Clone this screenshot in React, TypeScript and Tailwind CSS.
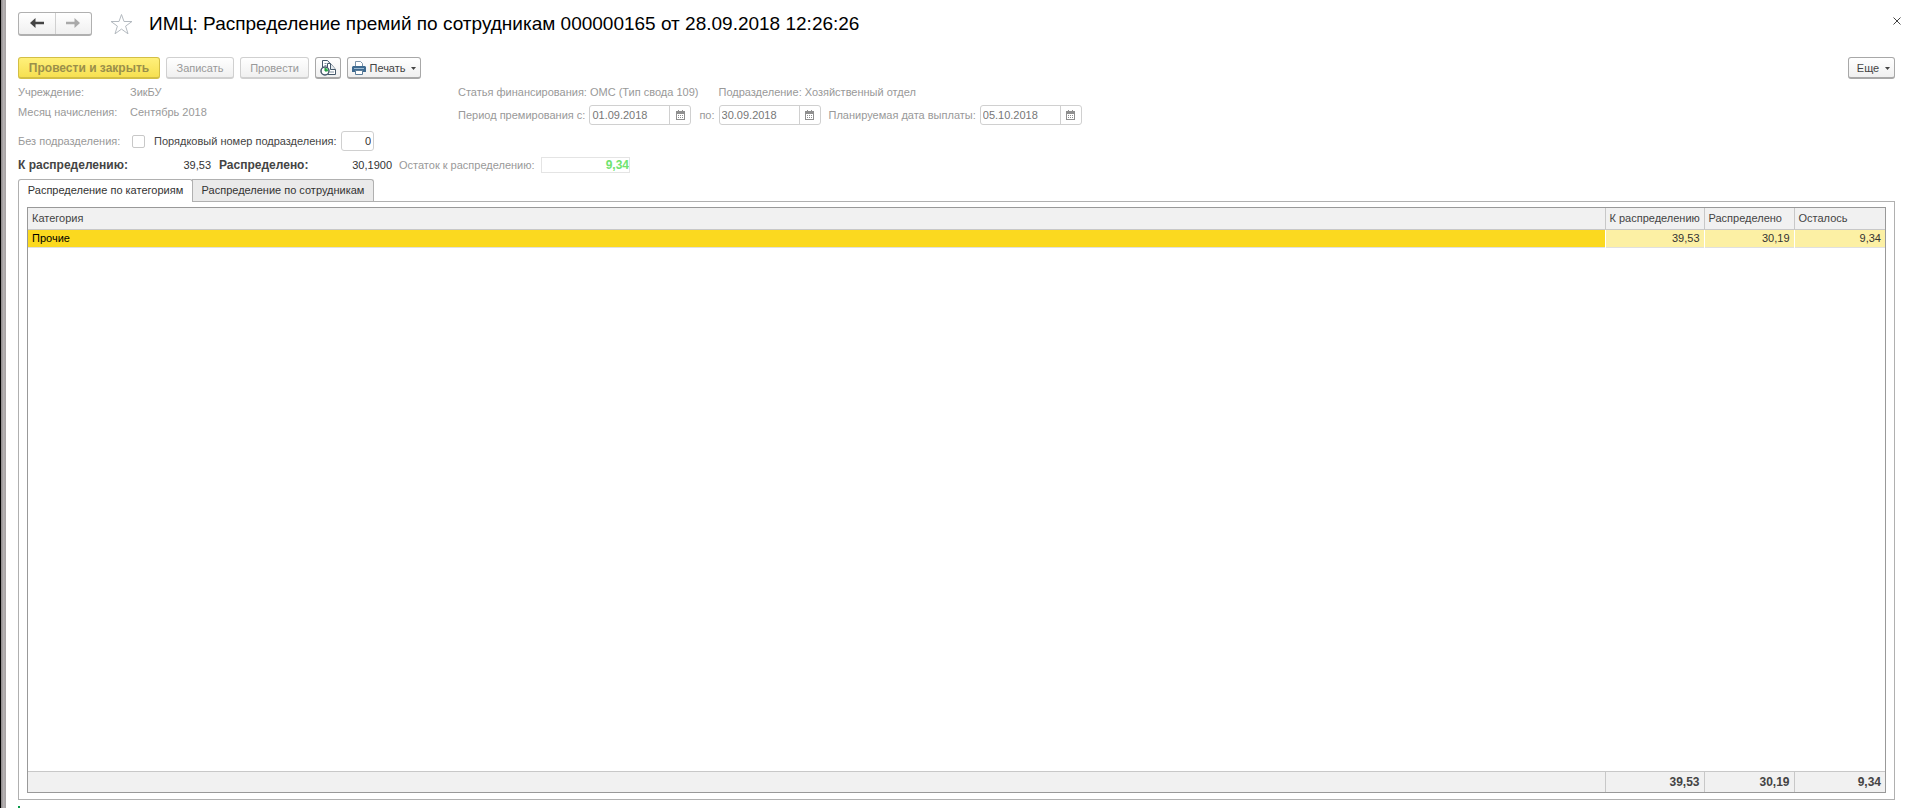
import { useState } from "react";

interface CategoryRow {
  name: string;
  total: string;
  spread: string;
  rest: string;
}

const rows: CategoryRow[] = [{ name: "Прочие", total: "39,53", spread: "30,19", rest: "9,34" }];

const tabs = ["Распределение по категориям", "Распределение по сотрудникам"];

const buttonBase =
  "flex h-[22px] items-center justify-center rounded-[3px] border border-b-2 bg-gradient-to-b from-white to-[#f0f0f0]";

function CalendarIcon() {
  return (
    <svg width="9" height="10" viewBox="0 0 9 10" fill="none" shapeRendering="crispEdges">
      <path d="M0 1h9v9H0z" fill="#8f8f8f" />
      <path d="M1 4h7v5H1z" fill="#fff" />
      <path d="M2 0h1v2H2zM6 0h1v2H6z" fill="#8f8f8f" />
      <path d="M2 5h1v1H2zM4 5h1v1H4zM6 5h1v1H6zM2 7h1v1H2zM4 7h1v1H4zM6 7h1v1H6z" fill="#8f8f8f" />
    </svg>
  );
}

function ArrowIcon({ className }: { className: string }) {
  return (
    <svg width="14" height="10" viewBox="0 0 14 10" className={className}>
      <path d="M0 5 5.500 0v3.700H14v2.600H5.500V10z" fill="currentColor" />
    </svg>
  );
}

function Caret() {
  return (
    <svg width="5" height="3" viewBox="0 0 5 3" className="mt-0.5">
      <path d="M0 0h5L2.500 3z" fill="#444" />
    </svg>
  );
}

function DateField({ id, label, value }: { id: string; label: string; value: string }) {
  return (
    <div className="flex items-center gap-1">
      <label htmlFor={id}>{label}</label>
      <div className="flex h-5 w-[102px] overflow-hidden rounded-[3px] border border-[#d0d0d0] bg-white">
        <input id={id} defaultValue={value} className="w-20 border-r border-[#d0d0d0] px-0.5 text-[#777] outline-none" />
        <button aria-label="Выбрать дату" className="flex flex-1 items-center justify-center">
          <CalendarIcon />
        </button>
      </div>
    </div>
  );
}

export default function App() {
  const [activeTab, setActiveTab] = useState(0);

  return (
    <div className="flex min-h-screen bg-white font-['Liberation_Sans',Arial,sans-serif] text-[11px] leading-4 text-[#444]">
      <div className="w-1.5 shrink-0 border-l border-black bg-gradient-to-r from-[#8c8889] via-[#b5b1b2] to-[#a5a1a2]" />

      <main className="flex min-w-0 flex-1 flex-col pl-3 pr-3">
        {/* Title */}
        <header className="flex h-[46px] items-center pt-px">
          <div className="flex h-6 w-[74px] rounded-[3px] border border-b-2 border-[#b0b0b0] bg-gradient-to-b from-white to-[#f0f0f0]">
            <button aria-label="Назад" className="flex flex-1 items-center justify-center border-r border-[#d0d0d0]">
              <ArrowIcon className="text-[#444]" />
            </button>
            <button aria-label="Вперед" className="flex flex-1 items-center justify-center">
              <ArrowIcon className="rotate-180 text-[#aaa]" />
            </button>
          </div>
          <button aria-label="Избранное" className="ml-[18px]">
            <svg width="23" height="22" viewBox="0 0 23 22" fill="none" stroke="#b4bac0">
              <path d="M11.500 1.500 14 8.500h8l-6.400 4.600 2.400 7.700-6.500-4.700L5 20.800l2.400-7.700L1 8.500h8z" />
            </svg>
          </button>
          <h1 className="ml-4 flex-1 text-[19px] leading-6 text-black">
            ИМЦ: Распределение премий по сотрудникам 000000165 от 28.09.2018 12:26:26
          </h1>
          <button aria-label="Закрыть" className="-mr-1.5 mb-1.5">
            <svg width="8" height="8" viewBox="0 0 8 8" stroke="#444">
              <path d="M.5.5l7 7M7.500.5l-7 7" />
            </svg>
          </button>
        </header>

        {/* Command bar */}
        <div className="mt-[11px] flex gap-1.5">
          <button className="h-[22px] w-[142px] rounded-[3px] border border-b-2 border-[#d3bf45] bg-gradient-to-b from-[#fff07a] to-[#f6e050] text-[12px] font-bold text-[#9a8f4a]">
            Провести и закрыть
          </button>
          <button className={`${buttonBase} w-[68px] border-[#d0d0d0] text-[#999]`}>Записать</button>
          <button className={`${buttonBase} w-[69px] border-[#d0d0d0] text-[#999]`}>Провести</button>
          <button aria-label="История" className={`${buttonBase} w-[26px] border-[#a8a8a8]`}>
            <svg width="17" height="16" viewBox="0 0 17 16" fill="#fff" stroke="#45586a">
              <path d="M2.500 12V.5h5l3.500 4V12z" />
              <path d="M7.500 14.500V3.500h3l5 6v5z" />
              <path d="M10.500 3.500v6h5" fill="#e6ebef" />
              <path d="M10 12h4" stroke="#8494a3" />
              <path d="M4.500 3.500h2M4.500 5.500h2" stroke="#8494a3" />
              <circle cx="5" cy="11" r="4" strokeWidth="1.500" />
              <path d="M5 11V8a3 3 0 0 1 3 3z" fill="#2fc04c" stroke="none" />
              <path d="M5 8v3h2.500" fill="none" stroke="#1f8f3a" />
            </svg>
          </button>
          <button className={`${buttonBase} w-[74px] gap-[3px] border-[#a8a8a8]`}>
            <svg width="14" height="14" viewBox="0 0 14 14">
              <path d="M3.500 6V.5h5l2 2V6" fill="#fff" stroke="#7b93a9" />
              <path d="M1 5h12l1 1v5H0V6z" fill="#3f6b91" />
              <path d="M2 7h10v1H2z" fill="#9dbbd3" />
              <path d="M3.500 9.500h7v4h-7z" fill="#fff" stroke="#5c7d99" />
            </svg>
            Печать
            <span className="ml-0.5 flex">
              <Caret />
            </span>
          </button>
          <button className={`${buttonBase} ml-auto w-[47px] gap-1.5 border-[#a8a8a8] pl-1`}>
            Еще
            <Caret />
          </button>
        </div>

        {/* Document details */}
        <div className="mt-[5px] flex text-[#999]">
          <dl className="grid w-[440px] grid-cols-[112px_1fr] content-start gap-y-1">
            <dt>Учреждение:</dt>
            <dd>ЗикБУ</dd>
            <dt>Месяц начисления:</dt>
            <dd>Сентябрь 2018</dd>
          </dl>
          <div>
            <div className="flex gap-5">
              <span>Статья финансирования: ОМС (Тип свода 109)</span>
              <span>Подразделение: Хозяйственный отдел</span>
            </div>
            <div className="mt-[5px] flex gap-2">
              <DateField id="from" label="Период премирования с:" value="01.09.2018" />
              <DateField id="to" label="по:" value="30.09.2018" />
              <DateField id="pay" label="Планируемая дата выплаты:" value="05.10.2018" />
            </div>
          </div>
        </div>

        <div className="mt-1.5 flex h-5 items-center">
          <label htmlFor="nodept" className="w-[114px] text-[#999]">
            Без подразделения:
          </label>
          <input
            id="nodept"
            type="checkbox"
            className="size-[13px] appearance-none rounded-[2px] border border-[#c8c8c8] bg-white"
          />
          <label htmlFor="order" className="ml-[9px] w-[187px]">
            Порядковый номер подразделения:
          </label>
          <input
            id="order"
            defaultValue="0"
            className="h-5 w-[33px] rounded-[3px] border border-[#d0d0d0] px-0.5 text-right text-[#333] outline-none"
          />
        </div>

        <div className="mt-1.5 flex h-4 items-center">
          <span className="w-[120px] text-[12px] font-bold">К распределению:</span>
          <span className="w-[73px] text-right text-[#333]">39,53</span>
          <span className="ml-2 w-[100px] text-[12px] font-bold">Распределено:</span>
          <span className="w-[73px] text-right text-[#333]">30,1900</span>
          <label htmlFor="rest" className="ml-[7px] w-[142px] text-[#999]">
            Остаток к распределению:
          </label>
          <input
            id="rest"
            readOnly
            value="9,34"
            className="h-4 w-[89px] border border-[#e4e4e4] text-right text-[12px] font-bold text-[#6fe36f] outline-none"
          />
        </div>

        {/* Tabs */}
        <div role="tablist" className="mt-1.5 flex">
          {tabs.map((tab, i) => (
            <button
              key={tab}
              role="tab"
              aria-selected={activeTab === i}
              onClick={() => setActiveTab(i)}
              className={
                activeTab === i
                  ? "z-10 -mb-px h-[23px] w-[175px] rounded-t-[3px] border border-b-0 border-[#b0b0b0] bg-white pb-0.5 text-[#333]"
                  : "-ml-px h-[22px] w-[182px] rounded-tr-[3px] border border-b-0 border-[#b0b0b0] bg-[#eaeaea] pb-0.5 text-[#333]"
              }
            >
              {tab}
            </button>
          ))}
        </div>

        <section className="grid flex-1 border border-[#b0b0b0] px-2 pb-1.5 pt-[5px]">
          <div className="grid border border-[#999]">
            <table className="h-full w-full table-fixed border-collapse">
              <colgroup>
                <col />
                <col className="w-[99px]" />
                <col className="w-[90px]" />
                <col className="w-[91px]" />
              </colgroup>
              <thead>
                <tr className="h-[21px] border-b border-[#c8c8c8] bg-[#f1f1f1] text-left">
                  <th className="px-1 font-normal">Категория</th>
                  <th className="whitespace-nowrap border-l border-[#c8c8c8] px-1 font-normal">К распределению</th>
                  <th className="border-l border-[#c8c8c8] px-1 font-normal">Распределено</th>
                  <th className="border-l border-[#c8c8c8] px-1 font-normal">Осталось</th>
                </tr>
              </thead>
              <tbody>
                {rows.map((row) => (
                  <tr key={row.name} className="h-[18px] border-b border-[#e0e0e0] bg-[#fcf0a4] text-right text-[#333]">
                    <td className="bg-[#fbd91f] px-1 text-left text-black">{row.name}</td>
                    <td className="border-l border-white px-1">{row.total}</td>
                    <td className="border-l border-white px-1">{row.spread}</td>
                    <td className="border-l border-white px-1">{row.rest}</td>
                  </tr>
                ))}
                <tr>
                  <td colSpan={4} />
                </tr>
              </tbody>
              <tfoot>
                <tr className="h-[21px] border-t border-[#c8c8c8] bg-[#f1f1f1] text-right text-[12px] font-bold">
                  <td />
                  <td className="border-l border-[#c8c8c8] px-1">39,53</td>
                  <td className="border-l border-[#c8c8c8] px-1">30,19</td>
                  <td className="border-l border-[#c8c8c8] px-1">9,34</td>
                </tr>
              </tfoot>
            </table>
          </div>
        </section>
        <div className="mt-1.5 h-0.5 w-0.5 bg-[#0a9a4a]" />
      </main>
    </div>
  );
}
